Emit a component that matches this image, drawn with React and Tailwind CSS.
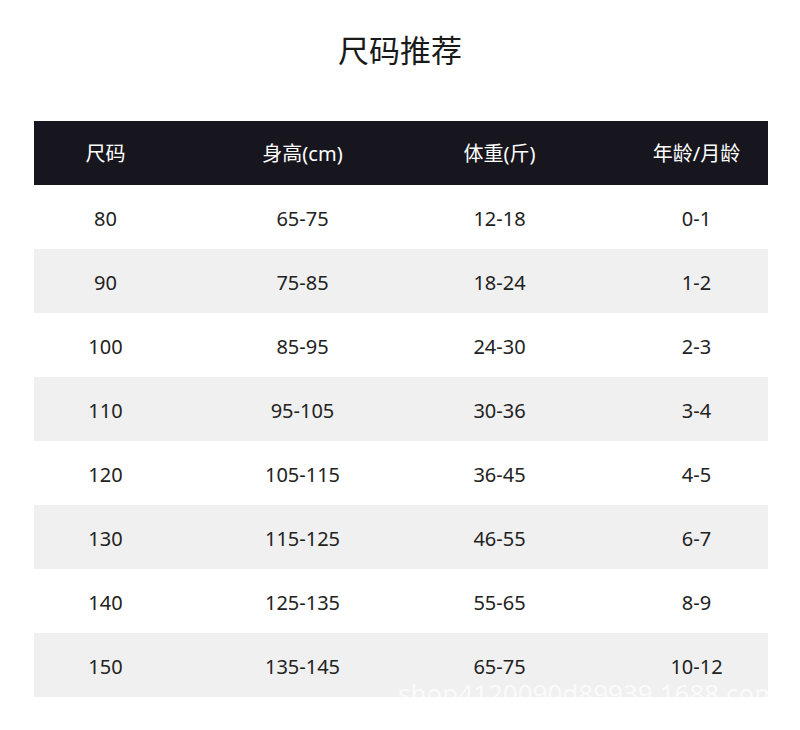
const rows = [
  ["80", "65-75", "12-18", "0-1"],
  ["90", "75-85", "18-24", "1-2"],
  ["100", "85-95", "24-30", "2-3"],
  ["110", "95-105", "30-36", "3-4"],
  ["120", "105-115", "36-45", "4-5"],
  ["130", "115-125", "46-55", "6-7"],
  ["140", "125-135", "55-65", "8-9"],
  ["150", "135-145", "65-75", "10-12"],
];

const headers = ["尺码", "身高(cm)", "体重(斤)", "年龄/月龄"];

function App() {
  return (
    <div
      className="w-[800px] h-[730px] bg-white text-[#222]"
      style={{ fontFamily: '"Noto Sans", "Noto Sans CJK SC", sans-serif' }}
    >
      <h1 className="h-[121px] pt-[29px] text-center text-[31px] leading-[42px] font-normal text-[#1a1a1a]">
        尺码推荐
      </h1>

      <div className="relative ml-[34px] mr-[32px] overflow-hidden">
        <div className="h-[64px] bg-[#17161e] text-white">
          <div className="grid grid-cols-4 h-full mx-[-27px] pt-[2px] items-center text-center text-[20px]">
            {headers.map((h) => (
              <span key={h}>{h}</span>
            ))}
          </div>
        </div>

        {rows.map((r, i) => (
          <div
            key={r[0]}
            className={i % 2 === 1 ? "h-[64px] bg-[#f0f0f0]" : "h-[64px] bg-white"}
          >
            <div className="grid grid-cols-4 h-full mx-[-27px] pt-[3px] items-center text-center text-[20px]">
              {r.map((c, j) => (
                <span key={j}>{c}</span>
              ))}
            </div>
          </div>
        ))}

        <div className="absolute left-[364px] top-[559px] text-[26px] leading-none whitespace-nowrap text-white/70 pointer-events-none">
          shop4120090d89939.1688.com
        </div>
      </div>
    </div>
  );
}

export default App;
